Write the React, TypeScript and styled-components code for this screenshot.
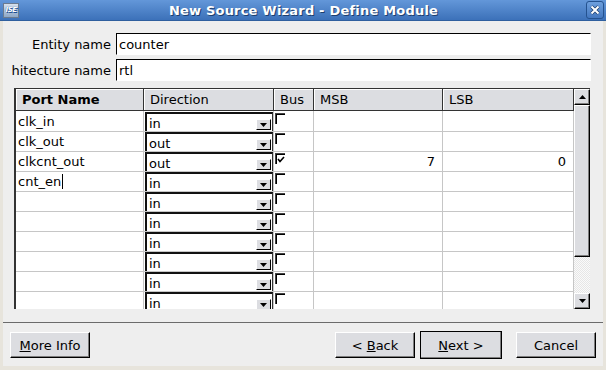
import React from "react";
import styled, { createGlobalStyle } from "styled-components";

const GlobalStyle = createGlobalStyle`
  html, body { margin: 0; padding: 0; }
  body {
    background: #e7e4dc;
    font-family: "DejaVu Sans", "Liberation Sans", sans-serif;
    font-size: 13px;
    color: #000;
  }
`;

const Window = styled.div`
  width: 606px;
  height: 370px;
  display: flex;
  flex-direction: column;
  overflow: hidden;
`;

const TitleBar = styled.div`
  height: 20px;
  border-bottom: 1px solid #2f5f9e;
  background: linear-gradient(#6397d9, #3c71b9);
  display: grid;
  grid-template-columns: 1fr auto 1fr;
  align-items: center;
  padding: 0 2px 0 3px;
`;

const AppIcon = styled.div`
  width: 14px;
  height: 13px;
  border: 1px solid #6b7b90;
  background: linear-gradient(#d6e0ec, #8ea8c8);
  display: flex;
  align-items: center;
  justify-content: center;
  font-size: 7px;
  font-weight: bold;
  font-style: italic;
  color: #fff;
  text-shadow: 0 0 1px #1d4f95, 1px 1px 0 #1d4f95;
  letter-spacing: -0.5px;
`;

const Title = styled.div`
  color: #fff;
  font-weight: bold;
  font-size: 13px;
  letter-spacing: 0.2px;
  text-shadow: 1px 1px 0 #1e3f6e;
  white-space: nowrap;
  padding-top: 1px;
`;

const CloseButton = styled.div`
  justify-self: end;
  width: 16px;
  height: 16px;
  border: 1px solid #24528f;
  border-radius: 3px;
  background: linear-gradient(#6d9fdd, #4478c0);
  display: flex;
  align-items: center;
  justify-content: center;
`;

const Body = styled.div`
  flex: 1;
  margin: 0 3px 4px;
  background: #eeeeee;
  display: flex;
  flex-direction: column;
  padding-top: 12px;
`;

const FieldRow = styled.div`
  display: flex;
  align-items: center;
  gap: 5px;
  height: 22px;
  margin: 0 0 4px 9px;
`;

const Label = styled.div`
  width: 99px;
  display: flex;
  justify-content: flex-end;
  overflow: hidden;
  white-space: nowrap;
`;

const TextBox = styled.div`
  width: 475px;
  height: 22px;
  box-sizing: border-box;
  background: #fff;
  border: 1px solid;
  border-color: #000 #fff #fff #000;
  padding-left: 2px;
  display: flex;
  align-items: center;
`;

const TableFrame = styled.div`
  margin: 3px 0 0 11px;
  width: 574px;
  display: flex;
  border-top: 1px solid #333;
  border-left: 2px solid #333;
`;

const Grid = styled.div`
  width: 558px;
  display: flex;
  flex-direction: column;
`;

const COLS = "128px 130px 40px 129px 131px";

const HeaderRow = styled.div`
  display: grid;
  grid-template-columns: ${COLS};
  height: 22px;
`;

const HeaderCell = styled.div<{ $bold?: boolean }>`
  background: #dcdde1;
  border-right: 1px solid #333;
  border-bottom: 1px solid #333;
  box-shadow: inset 1px 1px 0 #fff;
  padding-left: 6px;
  display: flex;
  align-items: center;
  font-weight: ${(p) => (p.$bold ? "bold" : "normal")};
`;

const Viewport = styled.div`
  height: 198px;
  overflow: hidden;
  background: #fff;
`;

const DataRow = styled.div`
  display: grid;
  grid-template-columns: ${COLS};
  height: 20px;
`;

const Cell = styled.div<{ $right?: boolean }>`
  border-right: 1px solid #c6c6c6;
  border-bottom: 1px solid #c6c6c6;
  display: flex;
  align-items: center;
  justify-content: ${(p) => (p.$right ? "flex-end" : "flex-start")};
  padding: ${(p) => (p.$right ? "0 7px 0 0" : "0 0 0 2px")};
  white-space: nowrap;
  overflow: hidden;
`;

const ComboCell = styled.div`
  border-right: 1px solid #c6c6c6;
  border-bottom: 1px solid #c6c6c6;
  display: flex;
  padding: 1px 0 0 1px;
`;

const Combo = styled.div`
  flex: 1;
  background: #fff;
  border-top: 2px solid #111;
  border-left: 2px solid #111;
  border-right: 1px solid #333;
  display: flex;
  align-items: center;
  justify-content: space-between;
  padding-left: 2px;
`;

const ComboText = styled.span`
  padding-top: 2px;
`;

const DropButton = styled.div`
  width: 13px;
  height: 9px;
  margin: 4px 1px 0 0;
  background: #dcdde1;
  border: 1px solid;
  border-color: #fff #000 #000 #fff;
  display: flex;
  align-items: center;
  justify-content: center;
`;

const BusCell = styled.div`
  border-right: 1px solid #c6c6c6;
  border-bottom: 1px solid #c6c6c6;
  padding: 2px 0 0 1px;
`;

const CheckBox = styled.div`
  width: 9px;
  height: 10px;
  border-top: 1px solid #444;
  border-left: 1px solid #444;
  box-shadow: inset 1px 1px 0 #000;
  display: flex;
  align-items: center;
  justify-content: center;
`;

const Caret = styled.span`
  display: inline-block;
  width: 0;
  height: 15px;
  border-left: 1px solid #000;
  margin-left: 1px;
`;

const ScrollBar = styled.div`
  width: 16px;
  height: 220px;
  display: flex;
  flex-direction: column;
`;

const ScrollButton = styled.div`
  height: 16px;
  box-sizing: border-box;
  background: #dcdde1;
  border: 1px solid;
  border-color: #fff #000 #000 #fff;
  box-shadow: inset -1px -1px 0 #7d7d7d;
  display: flex;
  align-items: center;
  justify-content: center;
`;

const Thumb = styled(ScrollButton)`
  height: 152px;
`;

const Trough = styled.div`
  flex: 1;
  background: repeating-conic-gradient(#e6e6e6 0 25%, #fafafa 0 50%) 0 0 / 2px 2px;
`;

const Separator = styled.div`
  margin-top: 13px;
  border-top: 1px solid #6b6b6b;
`;

const Footer = styled.div`
  display: flex;
  justify-content: space-between;
  align-items: center;
  padding: 8px 7px 0 7px;
`;

const ButtonGroup = styled.div`
  display: flex;
  align-items: center;
  gap: 5px;
`;

const Button = styled.div<{ $default?: boolean; $gapLeft?: number }>`
  width: ${(p) => (p.$default ? 82 : 80)}px;
  height: ${(p) => (p.$default ? 28 : 26)}px;
  box-sizing: border-box;
  background: #dcdde1;
  border: 1px solid;
  border-color: #fff #000 #000 #fff;
  box-shadow: inset -1px -1px 0 #7d7d7d;
  outline: ${(p) => (p.$default ? "1px solid #000" : "none")};
  outline-offset: -1px;
  display: flex;
  align-items: center;
  justify-content: center;
  margin-left: ${(p) => p.$gapLeft ?? 0}px;
`;

const ArrowDown = () => (
  <svg width="7" height="4" viewBox="0 0 7 4">
    <polygon points="0,0 7,0 3.5,4" fill="#000" />
  </svg>
);

const ArrowUp = () => (
  <svg width="7" height="4" viewBox="0 0 7 4">
    <polygon points="0,4 7,4 3.5,0" fill="#000" />
  </svg>
);

const Check = () => (
  <svg width="8" height="7" viewBox="0 0 8 7">
    <polyline points="1,3 3,5.5 7,1" fill="none" stroke="#000" strokeWidth="1.6" />
  </svg>
);

type Port = { name: string; dir: string; bus: boolean; msb: string; lsb: string; caret?: boolean };

const ports: Port[] = [
  { name: "clk_in", dir: "in", bus: false, msb: "", lsb: "" },
  { name: "clk_out", dir: "out", bus: false, msb: "", lsb: "" },
  { name: "clkcnt_out", dir: "out", bus: true, msb: "7", lsb: "0" },
  { name: "cnt_en", dir: "in", bus: false, msb: "", lsb: "", caret: true },
  ...Array.from({ length: 7 }, () => ({ name: "", dir: "in", bus: false, msb: "", lsb: "" })),
];

export default function App() {
  return (
    <Window>
      <GlobalStyle />
      <TitleBar>
        <AppIcon>ISE</AppIcon>
        <Title>New Source Wizard - Define Module</Title>
        <CloseButton>
          <svg width="10" height="10" viewBox="0 0 10 10">
            <path d="M1.5 1.5 L8.5 8.5 M8.5 1.5 L1.5 8.5" stroke="#1c3f70" strokeWidth="3.4" />
            <path d="M1.5 1.5 L8.5 8.5 M8.5 1.5 L1.5 8.5" stroke="#fff" strokeWidth="2" />
          </svg>
        </CloseButton>
      </TitleBar>
      <Body>
        <FieldRow>
          <Label><span>Entity name</span></Label>
          <TextBox>counter</TextBox>
        </FieldRow>
        <FieldRow>
          <Label><span>Architecture name</span></Label>
          <TextBox>rtl</TextBox>
        </FieldRow>
        <TableFrame>
          <Grid>
            <HeaderRow>
              <HeaderCell $bold>Port Name</HeaderCell>
              <HeaderCell>Direction</HeaderCell>
              <HeaderCell>Bus</HeaderCell>
              <HeaderCell>MSB</HeaderCell>
              <HeaderCell>LSB</HeaderCell>
            </HeaderRow>
            <Viewport>
              {ports.map((p, i) => (
                <DataRow key={i}>
                  <Cell>
                    {p.name}
                    {p.caret && <Caret />}
                  </Cell>
                  <ComboCell>
                    <Combo>
                      <ComboText>{p.dir}</ComboText>
                      <DropButton><ArrowDown /></DropButton>
                    </Combo>
                  </ComboCell>
                  <BusCell>
                    <CheckBox>{p.bus && <Check />}</CheckBox>
                  </BusCell>
                  <Cell $right>{p.msb}</Cell>
                  <Cell $right>{p.lsb}</Cell>
                </DataRow>
              ))}
            </Viewport>
          </Grid>
          <ScrollBar>
            <ScrollButton><ArrowUp /></ScrollButton>
            <Thumb />
            <Trough />
            <ScrollButton><ArrowDown /></ScrollButton>
          </ScrollBar>
        </TableFrame>
        <Separator />
        <Footer>
          <Button><span><u>M</u>ore Info</span></Button>
          <ButtonGroup>
            <Button><span>&lt; <u>B</u>ack</span></Button>
            <Button $default><span><u>N</u>ext &gt;</span></Button>
            <Button $gapLeft={9}>Cancel</Button>
          </ButtonGroup>
        </Footer>
      </Body>
    </Window>
  );
}
